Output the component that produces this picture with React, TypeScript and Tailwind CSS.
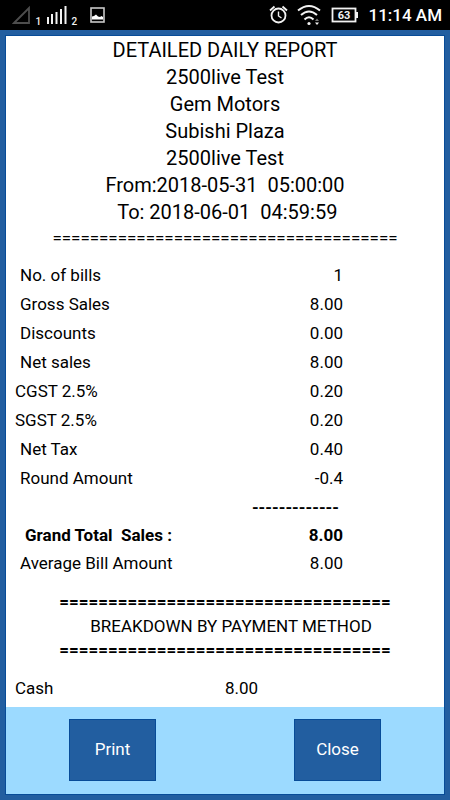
import React from "react";

interface SaleRow {
	label: string;
	value: string;
	flush?: boolean;
}

const headerLines = [
	"2500live Test",
	"Gem Motors",
	"Subishi Plaza",
	"2500live Test",
	"From:2018-05-31  05:00:00",
	" To: 2018-06-01  04:59:59",
];

const salesRows: SaleRow[] = [
	{ label: "No. of bills", value: "1" },
	{ label: "Gross Sales", value: "8.00" },
	{ label: "Discounts", value: "0.00" },
	{ label: "Net sales", value: "8.00" },
	{ label: "CGST 2.5%", value: "0.20", flush: true },
	{ label: "SGST 2.5%", value: "0.20", flush: true },
	{ label: "Net Tax", value: "0.40" },
	{ label: "Round Amount", value: "-0.4" },
];

const StatusBar: React.FC = () => {
	return (
		<div className="flex h-[30px] items-center justify-between bg-black pr-2 pl-3 text-white">
			<svg width="96" height="26" viewBox="0 0 96 26" fill="none">
				<path d="M2 21 L17 6 V21 Z" stroke="#4d4d4d" strokeWidth="1.8" />
				<g fill="#f2f2f2">
					<rect x="35" y="15" width="2" height="7" />
					<rect x="39" y="12" width="2" height="10" />
					<rect x="43.5" y="10" width="2" height="12" />
					<rect x="48" y="7" width="2" height="15" />
					<rect x="52.5" y="4" width="2" height="18" />
				</g>
				<rect x="79" y="6" width="13" height="14" stroke="#c8c8c8" strokeWidth="1.6" />
				<path
					d="M80 17.5 V14.5 L82 14 L84 12.5 L86 14.5 L88 15 L89.5 14 L91 15 V17.5 Z"
					fill="#fff"
				/>
				<g fill="#f2f2f2" fontFamily="Roboto, sans-serif" fontSize="10" fontWeight="500">
					<text x="23.5" y="23">
						1
					</text>
					<text x="59.5" y="23">
						2
					</text>
				</g>
			</svg>
			<div className="flex items-center gap-2.5">
				<svg width="92" height="22" viewBox="0 0 92 22" fill="none" stroke="#f2f2f2">
					<circle cx="11.5" cy="11.5" r="7" strokeWidth="1.8" />
					<path d="M11.5 7.5 V12 L14.5 14" strokeWidth="1.4" />
					<path d="M3 6.5 L7.5 2.5 M15.5 2.5 L20 6.5" strokeWidth="1.8" />
					<path d="M31 6.5 Q42 -2.5 53 6.5" strokeWidth="2" />
					<path d="M34 11 Q42 4 50 11" strokeWidth="2" />
					<path d="M37.5 15.5 Q42 11 46.5 15.5" strokeWidth="2" />
					<circle cx="42" cy="19.5" r="1.6" fill="#f2f2f2" stroke="none" />
					<path d="M48 17 L50 14.5 L52 17 Z" fill="#777" stroke="none" />
					<path d="M48 18.5 H52 L50 21 Z" fill="#f2f2f2" stroke="none" />
					<rect x="65.5" y="4.5" width="23" height="13" strokeWidth="1.8" />
					<rect x="89" y="8" width="2" height="6" fill="#f2f2f2" stroke="none" />
					<text
						x="77"
						y="15"
						textAnchor="middle"
						fill="#f2f2f2"
						stroke="none"
						fontFamily="Roboto, sans-serif"
						fontSize="11"
						fontWeight="700">
						63
					</text>
				</svg>
				<span className="text-[17px] leading-[30px] font-medium">11:14 AM</span>
			</div>
		</div>
	);
};

const App: React.FC = () => {
	return (
		<div className="flex min-h-screen flex-col bg-[#225ea0] font-[Roboto,sans-serif] text-black">
			<StatusBar />

			<main className="m-[6px] flex grow flex-col bg-white text-[17px] outline outline-[#084c98]">
				<header className="pt-px text-center text-xl leading-[27px] whitespace-pre">
					<h1>DETAILED DAILY REPORT</h1>
					{headerLines.map((line, i) => (
						<p key={i}>{line}</p>
					))}
					<p className="text-[17px] leading-6">{"=".repeat(37)}</p>
				</header>

				<table className="mt-[11px] w-full leading-[29px]">
					<tbody>
						{salesRows.map((row) => (
							<tr key={row.label}>
								<th
									scope="row"
									className={
										row.flush
											? "pl-[9px] text-left font-normal"
											: "pl-[14px] text-left font-normal"
									}>
									{row.label}
								</th>
								<td className="pr-[101px] text-right">{row.value}</td>
							</tr>
						))}
						<tr className="leading-7 font-bold">
							<td></td>
							<td className="pr-[105px] text-right">{"-".repeat(13)}</td>
						</tr>
						<tr className="leading-7 font-bold whitespace-pre">
							<th scope="row" className="pl-[19px] text-left">
								{"Grand Total  Sales :"}
							</th>
							<td className="pr-[101px] text-right">8.00</td>
						</tr>
						<tr>
							<th scope="row" className="pl-[14px] text-left font-normal">
								Average Bill Amount
							</th>
							<td className="pr-[101px] text-right">8.00</td>
						</tr>
					</tbody>
				</table>

				<div className="mt-3 text-center leading-6">
					<p className="font-bold">{"=".repeat(34)}</p>
					<h2 className="pl-3">BREAKDOWN BY PAYMENT METHOD</h2>
					<p className="font-bold">{"=".repeat(34)}</p>
				</div>

				<table className="mt-3 mb-1 w-full table-fixed leading-[29px]">
					<tbody>
						<tr>
							<th scope="row" className="pl-[9px] text-left font-normal">
								Cash
							</th>
							<td className="text-left">8.00</td>
						</tr>
					</tbody>
				</table>

				<footer className="mt-auto grid grid-cols-2 justify-items-center gap-3 bg-[#9cdaff] pt-3 pb-[13px] text-white">
					<button
						type="button"
						className="h-[62px] w-[87px] border border-[#084c98] bg-[#225ea0]">
						Print
					</button>
					<button
						type="button"
						className="h-[62px] w-[87px] border border-[#084c98] bg-[#225ea0]">
						Close
					</button>
				</footer>
			</main>
		</div>
	);
};

export default App;
